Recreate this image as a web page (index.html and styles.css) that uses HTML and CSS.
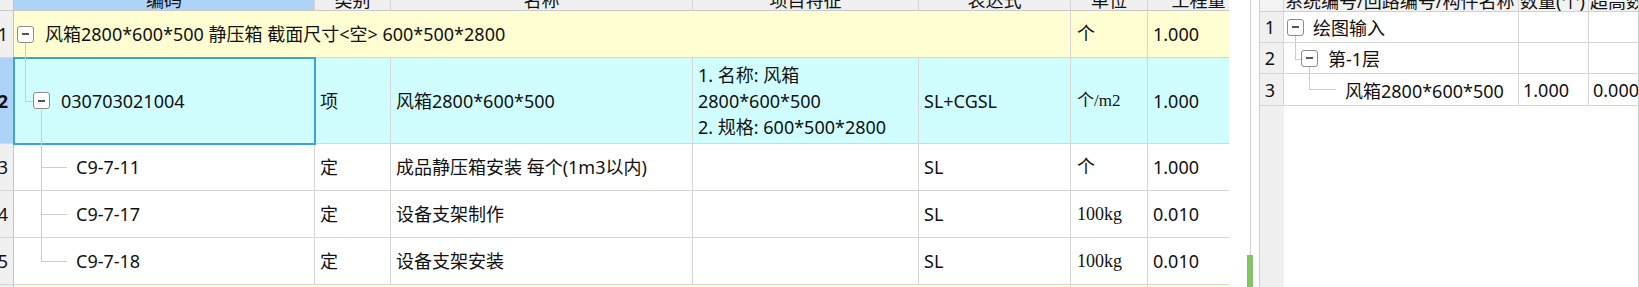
FILE: index.html
```html
<!DOCTYPE html>
<html lang="zh-CN">
<head>
    <meta charset="UTF-8">
    <title>清单定额</title>
    <link rel="stylesheet" href="styles.css">
</head>
<body>

<div class="screen">

    <!-- bill of quantities grid -->
    <div class="bill">
        <div class="bill-grid">
            <div class="hd rn-hd"></div>
            <div class="hd hd-sel"><span>编码</span></div>
            <div class="hd"><span>类别</span></div>
            <div class="hd"><span>名称</span></div>
            <div class="hd"><span>项目特征</span></div>
            <div class="hd"><span>表达式</span></div>
            <div class="hd"><span>单位</span></div>
            <div class="hd"><span>工程量</span></div>

            <div class="rn">1</div>
            <div class="cell code code-top yellow span5">
                <i class="ln ln-down"></i>
                <span class="tog"></span>风箱2800*600*500 静压箱 截面尺寸&lt;空&gt; 600*500*2800
            </div>
            <div class="cell unit yellow">个</div>
            <div class="cell yellow">1.000</div>

            <div class="rn rn-sel">2</div>
            <div class="cell code code-item cyan selected">
                <i class="ln ln-in"></i>
                <i class="ln ln-in-h"></i>
                <i class="ln ln-out"></i>
                <span class="tog"></span>030703021004
            </div>
            <div class="cell cyan">项</div>
            <div class="cell cyan">风箱2800*600*500</div>
            <div class="cell cyan"><div class="multi">1. 名称: 风箱<br>2800*600*500<br>2. 规格: 600*500*2800</div></div>
            <div class="cell cyan">SL+CGSL</div>
            <div class="cell unit cyan small">个/m2</div>
            <div class="cell cyan">1.000</div>

            <div class="rn">3</div>
            <div class="cell code code-leaf">
                <i class="ln ln-leaf"></i>
                <i class="ln ln-leaf-h"></i>
                C9-7-11
            </div>
            <div class="cell">定</div>
            <div class="cell">成品静压箱安装 每个(1m3以内)</div>
            <div class="cell"></div>
            <div class="cell">SL</div>
            <div class="cell unit">个</div>
            <div class="cell">1.000</div>

            <div class="rn">4</div>
            <div class="cell code code-leaf">
                <i class="ln ln-leaf"></i>
                <i class="ln ln-leaf-h"></i>
                C9-7-17
            </div>
            <div class="cell">定</div>
            <div class="cell">设备支架制作</div>
            <div class="cell"></div>
            <div class="cell">SL</div>
            <div class="cell unit">100kg</div>
            <div class="cell">0.010</div>

            <div class="rn">5</div>
            <div class="cell code code-leaf">
                <i class="ln ln-leaf ln-last"></i>
                <i class="ln ln-leaf-h"></i>
                C9-7-18
            </div>
            <div class="cell">定</div>
            <div class="cell">设备支架安装</div>
            <div class="cell"></div>
            <div class="cell">SL</div>
            <div class="cell unit">100kg</div>
            <div class="cell">0.010</div>

            <div class="rn">6</div>
            <div class="cell yellow span5"></div>
            <div class="cell yellow"></div>
            <div class="cell yellow"></div>
        </div>
    </div>

    <!-- splitter -->
    <div class="splitter">
        <div class="split-line"></div>
        <div class="split-mark"></div>
    </div>

    <!-- drawing input tree -->
    <div class="tree-panel">
        <div class="tree-grid">
            <div class="thd"></div>
            <div class="thd"><span>系统编号/回路编号/构件名称</span></div>
            <div class="thd"><span>数量(个)</span></div>
            <div class="thd"><span>超高数量</span></div>

            <div class="trn">1</div>
            <div class="tcell tnode lvl1">
                <i class="ln t-down1"></i>
                <span class="tog"></span>绘图输入
            </div>
            <div class="tcell"></div>
            <div class="tcell"></div>

            <div class="trn">2</div>
            <div class="tcell tnode lvl2">
                <i class="ln t-in2"></i>
                <i class="ln t-in2-h"></i>
                <i class="ln t-down2"></i>
                <span class="tog"></span>第-1层
            </div>
            <div class="tcell"></div>
            <div class="tcell"></div>

            <div class="trn">3</div>
            <div class="tcell tnode lvl3">
                <i class="ln t-in3"></i>
                <i class="ln t-in3-h"></i>
                风箱2800*600*500
            </div>
            <div class="tcell">1.000</div>
            <div class="tcell">0.000</div>

            <div class="trn trn-fill"></div>
            <div class="tfill"></div>
        </div>
    </div>

</div>

</body>
</html>
```

FILE: styles.css
```css
* {
    box-sizing: border-box;
}
body {
    margin: 0;
    background: #fff;
    font-family: "Noto Sans", "Noto Sans CJK SC", sans-serif;
    font-size: 18px;
    color: #111;
    overflow: hidden;
}
.screen {
    display: flex;
    width: 1639px;
    height: 287px;
    overflow: hidden;
}

/* ---- left grid ---- */
.bill {
    width: 1229px;
    flex: none;
    overflow: hidden;
}
.bill-grid {
    display: grid;
    grid-template-columns: 14px 301px 76px 302px 226px 152px 77px 102px;
    grid-template-rows: 11px 47px 86px 47px 47px 47px 20px;
}
.hd {
    background: #f0f0f0;
    border-right: 1px solid #d4d4d4;
    border-bottom: 1px solid #c8c8c8;
    overflow: hidden;
    text-align: center;
    white-space: nowrap;
}
.hd span {
    display: block;
    line-height: 20px;
    margin-top: -10px;
}
.hd-sel {
    background: #aed3f7;
}
.rn-hd {
    border-right-color: #c4c4c4;
}
.rn {
    background: #f0f0f0;
    border-right: 1px solid #c4c4c4;
    border-bottom: 1px solid #d6d6d6;
    display: flex;
    align-items: center;
    justify-content: flex-end;
    padding-right: 5px;
    overflow: hidden;
    white-space: nowrap;
}
.rn-sel {
    background: #aed3f7;
    font-weight: bold;
}
.cell {
    border-right: 1px solid #d6d6d6;
    border-bottom: 1px solid #d6d6d6;
    padding-left: 5px;
    display: flex;
    align-items: center;
    white-space: nowrap;
    overflow: hidden;
    line-height: 24px;
}
.span5 {
    grid-column: span 5;
}
.yellow {
    background: #fefed2;
}
.cyan {
    background: #d0feff;
}
.selected {
    position: relative;
    z-index: 2;
    overflow: visible;
    outline: 2px solid #3ba3d8;
    outline-offset: -1px;
}
.multi {
    line-height: 26px;
}
.unit {
    font-family: "Liberation Serif", "Noto Sans CJK SC", serif;
    font-size: 18px;
    padding-left: 6px;
}
.unit.small {
    font-size: 17px;
}

/* tree column */
.code {
    position: relative;
}
.code-top {
    padding-left: 3px;
}
.code-item {
    padding-left: 19px;
}
.code-leaf {
    padding-left: 62px;
}
.tog {
    width: 17px;
    height: 17px;
    flex: none;
    border: 1px solid #8c8c8c;
    border-radius: 3px;
    background: #fff;
    display: flex;
    align-items: center;
    justify-content: center;
    margin-right: 11px;
    position: relative;
    z-index: 1;
}
.tog::before {
    content: "";
    width: 7px;
    height: 2px;
    background: #555;
}
.ln {
    position: absolute;
    background: #cccccc;
}
.ln-down {
    left: 11px;
    top: 31px;
    bottom: -1px;
    width: 1px;
}
.ln-in {
    left: 11px;
    top: -2px;
    height: 45px;
    width: 1px;
}
.ln-in-h {
    left: 11px;
    top: 43px;
    width: 8px;
    height: 1px;
}
.ln-out {
    left: 27px;
    top: 52px;
    bottom: -2px;
    width: 1px;
}
.ln-leaf {
    left: 27px;
    top: 0;
    bottom: -1px;
    width: 1px;
}
.ln-leaf.ln-last {
    bottom: auto;
    height: 24px;
}
.ln-leaf-h {
    left: 27px;
    top: 23px;
    width: 26px;
    height: 1px;
}

/* ---- splitter ---- */
.splitter {
    width: 30px;
    flex: none;
    position: relative;
    padding-left: 21px;
}
.split-line {
    width: 1px;
    height: 100%;
    background: #cfcfcf;
}
.split-mark {
    position: absolute;
    left: 18px;
    bottom: 0;
    width: 6px;
    height: 32px;
    background: #84c462;
}

/* ---- right tree grid ---- */
.tree-panel {
    width: 380px;
    flex: none;
    border-left: 1px solid #cfcfcf;
    border-right: 1px solid #cfcfcf;
    overflow: hidden;
}
.tree-grid {
    display: grid;
    grid-template-columns: 24px 235px 70px 100px;
    grid-template-rows: 12px 31px 31px 32px 1fr;
    height: 287px;
}
.thd {
    background: #f3f3f3;
    border-right: 1px solid #d6d6d6;
    border-bottom: 1px solid #d0d0d0;
    overflow: hidden;
    white-space: nowrap;
    padding-left: 1px;
}
.thd span {
    display: block;
    line-height: 20px;
    margin-top: -9px;
}
.trn {
    background: #f0f0f0;
    border-right: 1px solid #d6d6d6;
    border-bottom: 1px solid #d6d6d6;
    display: flex;
    align-items: center;
    justify-content: center;
    padding-right: 3px;
}
.trn-fill {
    border-bottom: none;
    border-right: none;
}
.tcell {
    border-right: 1px solid #d6d6d6;
    border-bottom: 1px solid #d6d6d6;
    display: flex;
    align-items: center;
    padding-left: 4px;
    white-space: nowrap;
    overflow: hidden;
}
.tfill {
    grid-column: span 3;
}
.tnode {
    position: relative;
}
.tnode .tog {
    margin-right: 9px;
}
.lvl1 {
    padding-left: 3px;
}
.lvl2 {
    padding-left: 17px;
}
.lvl2 .tog {
    margin-right: 10px;
}
.lvl3 {
    padding-left: 61px;
}
.t-down1 {
    left: 11px;
    top: 23px;
    bottom: -1px;
    width: 1px;
}
.t-in2 {
    left: 11px;
    top: 0;
    height: 16px;
    width: 1px;
}
.t-in2-h {
    left: 11px;
    top: 16px;
    width: 6px;
    height: 1px;
}
.t-down2 {
    left: 25px;
    top: 23px;
    bottom: -1px;
    width: 1px;
}
.t-in3 {
    left: 25px;
    top: 0;
    height: 15px;
    width: 1px;
}
.t-in3-h {
    left: 25px;
    top: 15px;
    width: 27px;
    height: 1px;
}
```
